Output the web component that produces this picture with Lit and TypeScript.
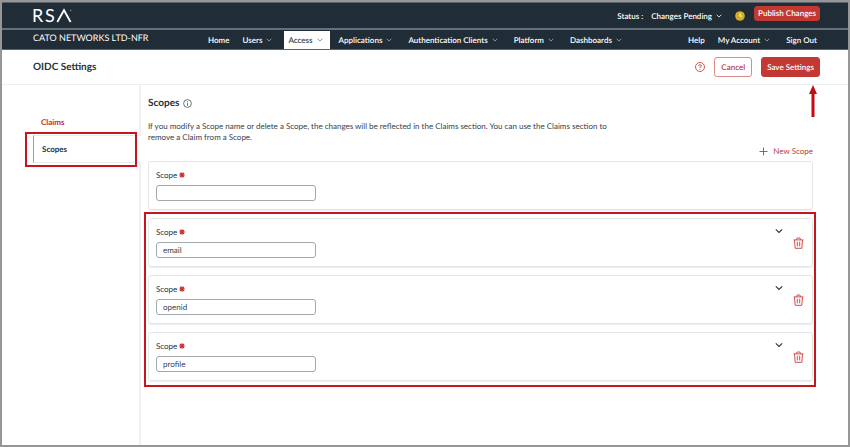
import { LitElement, html, css } from "lit";
import { customElement, property } from "lit/decorators.js";

const chevron = html`<svg class="chev" viewBox="0 0 6 4" aria-hidden="true"><path d="M.6 .7 3 3.1 5.4 .7" fill="none" stroke="currentColor" stroke-width=".8"/></svg>`;

@customElement("scope-card")
class ScopeCard extends LitElement {
  @property() value = "";
  @property({ type: Boolean }) saved = false;

  static styles = css`
    :host { display: block; }
    * { box-sizing: border-box; }
    .card {
      display: flex; justify-content: space-between; height: 49px;
      padding: 7px 8px 8px 7px; border: 1px solid #e3e6e7; border-radius: 3px;
      box-shadow: 0 1px 1px #eceeef;
    }
    .field { display: flex; flex-direction: column; gap: 4px; width: 160px; }
    label { display: flex; align-items: center; gap: 2px; font-size: 8px; line-height: 12px; }
    .star { width: 6px; height: 6px; color: #cc2b2b; }
    input {
      width: 100%; height: 18px; padding: 0 6px; border: 1px solid #a3a9ab; border-radius: 3px;
      background: #fff; color: #37434b; font: 8px/16px Lato, sans-serif; outline: none;
      text-rendering: geometricPrecision;
    }
    .actions { display: flex; gap: 10px; align-items: flex-start; }
    button { display: block; padding: 0; border: 0; background: none; color: #26323a; }
    svg { display: block; }
    .toggle { margin-top: 2px; }
    .toggle svg { width: 8px; height: 6px; }
    .delete { margin-top: 11px; color: #cb3b3b; }
    .delete svg { width: 11px; height: 12px; }
  `;

  render() {
    return html`
      <div class="card">
        <div class="field">
          <label for="scope">Scope
            <svg class="star" viewBox="0 0 6 6" aria-hidden="true"><path d="M3 .2V5.8M.2 3H5.8M1 1 5 5M5 1 1 5" stroke="currentColor" stroke-width="1.1"/></svg>
          </label>
          <input id="scope" type="text" .value=${this.value} required />
        </div>
        ${this.saved ? html`
          <div class="actions">
            <button class="toggle" aria-label="Expand scope">
              <svg viewBox="0 0 8 6"><path d="M.8 1.3 4 4.5 7.2 1.3" fill="none" stroke="currentColor" stroke-width="1.1"/></svg>
            </button>
            <button class="delete" aria-label="Delete scope">
              <svg viewBox="0 0 11 12"><g fill="none" stroke="currentColor" stroke-width=".9" stroke-linejoin="round"><path d="M.6 2.9H10.4M3.4 2.7 4.1 1H6.9L7.6 2.7M1.5 3 2.2 11.3H8.8L9.5 3"/><path d="M4.3 4.7V9.4M6.7 4.7V9.4"/></g></svg>
            </button>
          </div>` : ""}
      </div>`;
  }
}

@customElement("app-root")
class AppRoot extends LitElement {
  static styles = css`
    :host { display: block; font-family: Lato, sans-serif; font-size: 8px; color: #26323a; text-rendering: geometricPrecision; }
    * { box-sizing: border-box; }
    a { color: inherit; text-decoration: none; }
    button { font: inherit; color: inherit; padding: 0; border: 0; background: none; white-space: nowrap; text-rendering: inherit; }
    h1, h2, p { margin: 0; }
    svg { display: block; flex: none; }
    .chev { width: 6px; height: 4px; }
    .frame { display: flex; flex-direction: column; min-height: 100vh; border: 2px solid #969696; background: #fff; }
    .top {
      display: flex; align-items: center; justify-content: space-between; height: 28px;
      padding: 0 28px 0 31px; background: #202c36; border-top: 1px solid #59636b; border-bottom: 2px solid #64717a; color: #fff;
    }
    .logo { width: 40px; height: 20px; overflow: visible; }
    .logo text { font: 18px Lato, sans-serif; fill: #fff; }
    .status { display: flex; align-items: center; font-weight: 600; }
    .pending { display: flex; align-items: center; gap: 4px; margin-left: 8px; }
    .clock { width: 10px; height: 10px; margin: 0 9px 0 13px; }
    .btn {
      height: 20px; padding: 0 5px; border: 1px solid #c23934; border-radius: 3px;
      background: #c23934; color: #fff; font-weight: 600;
    }
    .publish { height: 15px; margin-bottom: 5px; padding: 0 3px; }
    .nav {
      display: flex; justify-content: space-between; align-items: stretch; height: 20px;
      padding: 0 28px 0 31px; background: #202c36; border-bottom: 1px solid #59636b; color: #fff;
    }
    .tenant { flex: none; width: 171px; font-size: 9px; line-height: 16px; }
    .links { display: flex; gap: 5px; flex: 1; padding-top: 1px; }
    .links > * { display: flex; align-items: center; gap: 4px; padding: 0 4px; font-weight: 600; white-space: nowrap; }
    .links > button { padding-right: 7px; }
    .links .chev { color: #aab2b8; }
    .links .on { background: #fff; color: #37434b; }
    .links .on .chev { color: #6c767d; }
    .account { flex: none; margin-right: -1px; }
    .bar {
      display: flex; align-items: center; justify-content: space-between; height: 35px;
      padding: 0 28px 0 31px; border-bottom: 1px solid #eceeef;
    }
    .bar h1 { font-size: 10px; line-height: 12px; font-weight: 700; }
    .actions { display: flex; align-items: center; gap: 9px; }
    .help { color: #c94541; }
    .help svg { width: 10px; height: 10px; }
    .cancel { padding: 0 6px; background: #fff; color: #c23934; border-color: #dc8a87; }
    .save { position: relative; }
    .arrow { position: absolute; top: 26px; right: 1px; width: 10px; height: 34px; }
    .body { display: flex; flex: 1; }
    .side { flex: none; width: 139px; padding: 30px 0 0 31px; border-right: 2px solid #f0f1f2; }
    .side a { display: block; padding-left: 8px; font-weight: 700; line-height: 14px; }
    .claims { color: #c9252d; }
    .tab { position: relative; margin: 6px -2px 0 0; border: 1px solid #e8eaeb; border-left: 1px solid #dd8087; border-right: 0; background: #fff; }
    .side .tab a { line-height: 26px; }
    .mark { position: absolute; border: 2px solid #c4161c; pointer-events: none; }
    .tab .mark { inset: -4px 4px -5px -9px; }
    .main { flex: 1; min-width: 0; padding: 12px 35px 0 7px; }
    .title { display: flex; align-items: center; gap: 4px; }
    .title h2 { font-size: 10px; line-height: 12px; font-weight: 700; }
    .title svg { width: 9px; height: 9px; }
    .desc { max-width: 460px; margin-top: 12px; line-height: 11px; color: #37434b; }
    .new { display: flex; align-items: center; gap: 5px; margin: 2px 0 4px auto; line-height: 12px; color: #c23934; }
    .new svg { width: 9px; height: 9px; }
    .cards { position: relative; display: flex; flex-direction: column; gap: 8px; margin-top: 8px; }
    .cards .mark { inset: -6px -3px -6px -4px; }
  `;

  render() {
    const menu = (name: string, on = false) => html`<button class=${on ? "on" : ""} aria-haspopup="true">${name}${chevron}</button>`;
    return html`
      <div class="frame">
        <header>
          <div class="top">
            <svg class="logo" viewBox="0 0 40 20" role="img" aria-label="RSA"><text x="-1" y="16">R</text><text x="12" y="16">S</text><path d="M24.3 16 31 4.2 37.6 16" fill="none" stroke="#fff" stroke-width="1.8"/><circle cx="37.8" cy="4.2" r=".5" fill="#fff"/></svg>
            <div class="status">
              <span>Status :</span>
              <button class="pending" aria-haspopup="true">Changes Pending ${chevron}</button>
              <svg class="clock" viewBox="0 0 10 10" aria-hidden="true"><circle cx="5" cy="5" r="4.8" fill="#d5ae27"/><path d="M5 2.2V5.2H7" fill="none" stroke="#fff" stroke-width=".9"/></svg>
              <button class="btn publish">Publish Changes</button>
            </div>
          </div>
          <div class="nav">
            <div class="tenant">CATO NETWORKS LTD-NFR</div>
            <nav class="links">
              <a href="#home">Home</a>
              ${menu("Users")}${menu("Access", true)}${menu("Applications")}${menu("Authentication Clients")}${menu("Platform")}${menu("Dashboards")}
            </nav>
            <div class="links account">
              <a href="#help">Help</a>${menu("My Account")}<a href="#signout">Sign Out</a>
            </div>
          </div>
        </header>
        <div class="bar">
          <h1>OIDC Settings</h1>
          <div class="actions">
            <button class="help" aria-label="Help"><svg viewBox="0 0 10 10"><circle cx="5" cy="5" r="4.5" fill="none" stroke="currentColor" stroke-width=".9"/><path d="M3.6 4Q3.6 2.7 5 2.7T6.4 3.9Q6.4 4.6 5 5.2V6M5 6.8V7.6" fill="none" stroke="currentColor" stroke-width=".9"/></svg></button>
            <button class="btn cancel">Cancel</button>
            <button class="btn save">Save Settings
              <svg class="arrow" viewBox="0 0 10 34" aria-hidden="true"><path d="M5 1 9 10H6.5V33H3.5V10H1Z" fill="#c00d12"/></svg>
            </button>
          </div>
        </div>
        <div class="body">
          <nav class="side">
            <a class="claims" href="#claims">Claims</a>
            <div class="tab"><a href="#scopes">Scopes</a><div class="mark"></div></div>
          </nav>
          <main class="main">
            <div class="title">
              <h2>Scopes</h2>
              <svg viewBox="0 0 9 9" aria-hidden="true"><circle cx="4.5" cy="4.5" r="3.9" fill="none" stroke="#45515a" stroke-width=".8"/><path d="M4.5 2.2V3.1M4.5 3.9V6.7" stroke="#45515a" stroke-width=".8"/></svg>
            </div>
            <p class="desc">If you modify a Scope name or delete a Scope, the changes will be reflected in the Claims section. You can use the Claims section to remove a Claim from a Scope.</p>
            <button class="new"><svg viewBox="0 0 9 9" aria-hidden="true"><path d="M4.5 .5V8.5M.5 4.5H8.5" stroke="currentColor" stroke-width=".9"/></svg>New Scope</button>
            <scope-card></scope-card>
            <div class="cards">
              ${["email", "openid", "profile"].map((v) => html`<scope-card saved .value=${v}></scope-card>`)}
              <div class="mark"></div>
            </div>
          </main>
        </div>
      </div>`;
  }
}
